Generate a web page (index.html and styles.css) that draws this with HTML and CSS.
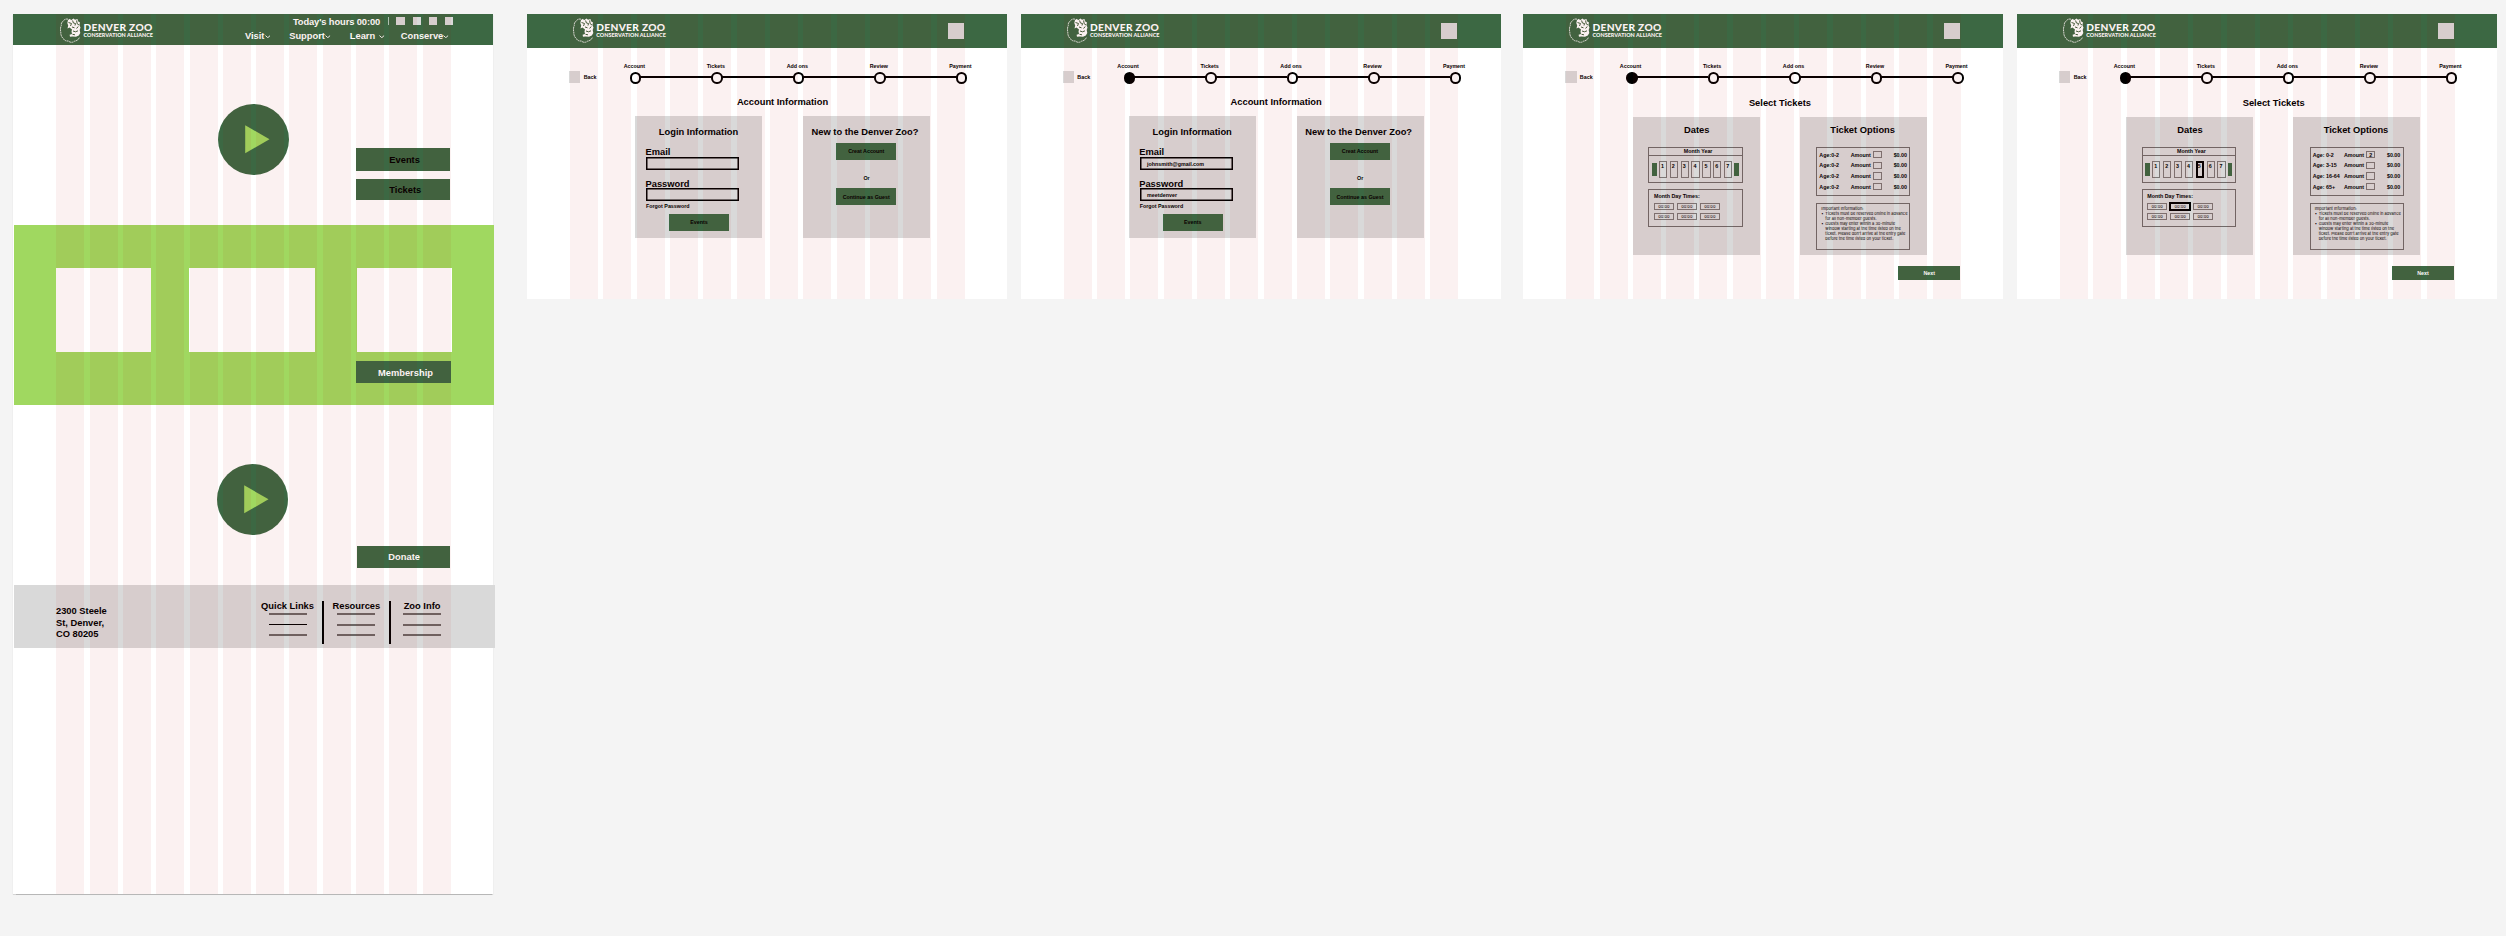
FILE: index.html
```html
<!DOCTYPE html>
<html lang="en">
<head>
<meta charset="utf-8">
<title>Denver Zoo wireframes</title>
<link rel="stylesheet" href="styles.css">
</head>
<body>
<svg class="defs" aria-hidden="true">
  <symbol id="lion" viewBox="0 0 21 25">
    <path d="M8 1.200C6 .6 4 1.500 3.200 3.200C1.800 3.800 1 5.500 1.300 7.500C.3 9.500 .2 12 .8 14C.6 17 1.800 19.500 3.500 20.800C4.500 22.800 6.800 23.200 8.500 23C10 24.800 13 24.600 14.500 23.200C17 22.800 18.800 21.500 19.500 19.200" fill="none" stroke="#fff" stroke-width=".8" stroke-dasharray="1.900 .5"/>
    <path d="M8 2L10 .8L11 2.200L13.500 .5L15 1.800L17.500 1L18 3.200L20 4.500L19.400 7L20.500 9.500L19.700 12L20.300 15L18.800 17.500L16 18.800L12.500 18.400L10 18.700L9.600 16.800L12 16L11.500 13.500L12 11.500L9.500 9.500L7.500 10.500L8.200 7.500L7.300 5Z" fill="#fff"/>
    <path d="M8.500 4.500L11.500 5.500L10.500 8M12.600 2.500L13.400 5L15.500 5.500L15 7.500M16.600 2.500L17.200 5.800L19 7M12 9L14.500 9.800M13 13L15.500 13.800L18 12.800M18.200 8.500L16.600 10.500M12.500 16.300L15 16.800" fill="none" stroke="#41603c" stroke-width="1"/>
  </symbol>
  <symbol id="chevron" viewBox="0 0 5 3">
    <path d="M.4 .5L2.500 2.400L4.600 .5" fill="none" stroke="#fff" stroke-width=".85"/>
  </symbol>
  <symbol id="play" viewBox="0 0 71 71">
    <circle cx="35.500" cy="35.500" r="35.500" fill="#3c6843"/>
    <path d="M27.200 21.200L51.500 35.300L27.200 49.300Z" fill="#a0d860"/>
  </symbol>
</svg>

<main class="board">
  <section class="frame home">
    <header class="home-header">
      <div class="logo"><svg><use href="#lion"/></svg><div><b>DENVER ZOO</b><i>CONSERVATION ALLIANCE</i></div></div>
      <div class="home-menu">
        <div class="hours"><span>Today's hours 00:00</span><hr><em></em><em></em><em></em><em></em></div>
        <nav class="nav">
          <a>Visit<svg><use href="#chevron"/></svg></a>
          <a>Support<svg><use href="#chevron"/></svg></a>
          <a>Learn <svg class="spaced"><use href="#chevron"/></svg></a>
          <a>Conserve<svg><use href="#chevron"/></svg></a>
        </nav>
      </div>
    </header>
    <div class="hero">
      <svg class="play"><use href="#play"/></svg>
      <div class="hero-actions"><a class="cta dark tall">Events</a><a class="cta dark">Tickets</a></div>
    </div>
    <div class="band">
      <div class="cards"><div></div><div></div><div></div></div>
      <a class="cta member">Membership</a>
    </div>
    <div class="hero second">
      <svg class="play"><use href="#play"/></svg>
      <a class="cta donate">Donate</a>
    </div>
    <footer class="footer">
      <address>2300 Steele<br>St, Denver,<br>CO 80205</address>
      <div class="links l1"><b>Quick Links</b><hr><hr class="strong"><hr></div>
      <div class="links l2"><b>Resources</b><hr><hr><hr></div>
      <div class="links l3"><b>Zoo Info</b><hr><hr><hr></div>
    </footer>
    <div class="columns"><i></i><i></i><i></i><i></i><i></i><i></i><i></i><i></i><i></i><i></i><i></i><i></i></div>
  </section>

  <section class="frame flow f2">
    <header class="flow-header"><div class="logo"><svg><use href="#lion"/></svg><div><b>DENVER ZOO</b><i>CONSERVATION ALLIANCE</i></div></div><em></em></header>
    <div class="progress">
      <div class="back"><em></em>Back</div>
      <ol class="steps"><li>Account</li><li>Tickets</li><li>Add ons</li><li>Review</li><li>Payment</li></ol>
    </div>
    <h1>Account Information</h1>
    <div class="panels account">
      <div class="panel login">
        <h2>Login Information</h2>
        <label>Email</label><div class="input"></div>
        <label>Password</label><div class="input"></div>
        <span class="forgot">Forgot Password</span>
        <a class="button">Events</a>
      </div>
      <div class="panel new">
        <h2>New to the Denver Zoo?</h2>
        <a class="button">Creat Account</a><span>Or</span><a class="button">Continue as Guest</a>
      </div>
    </div>
    <div class="columns"><i></i><i></i><i></i><i></i><i></i><i></i><i></i><i></i><i></i><i></i><i></i><i></i></div>
  </section>

  <section class="frame flow f3">
    <header class="flow-header"><div class="logo"><svg><use href="#lion"/></svg><div><b>DENVER ZOO</b><i>CONSERVATION ALLIANCE</i></div></div><em></em></header>
    <div class="progress">
      <div class="back"><em></em>Back</div>
      <ol class="steps"><li class="done">Account</li><li>Tickets</li><li>Add ons</li><li>Review</li><li>Payment</li></ol>
    </div>
    <h1>Account Information</h1>
    <div class="panels account">
      <div class="panel login">
        <h2>Login Information</h2>
        <label>Email</label><div class="input">johnsmith@gmail.com</div>
        <label>Password</label><div class="input">meetdenver</div>
        <span class="forgot">Forgot Password</span>
        <a class="button">Events</a>
      </div>
      <div class="panel new">
        <h2>New to the Denver Zoo?</h2>
        <a class="button">Creat Account</a><span>Or</span><a class="button">Continue as Guest</a>
      </div>
    </div>
    <div class="columns"><i></i><i></i><i></i><i></i><i></i><i></i><i></i><i></i><i></i><i></i><i></i><i></i></div>
  </section>

  <section class="frame flow f4">
    <header class="flow-header"><div class="logo"><svg><use href="#lion"/></svg><div><b>DENVER ZOO</b><i>CONSERVATION ALLIANCE</i></div></div><em></em></header>
    <div class="progress">
      <div class="back"><em></em>Back</div>
      <ol class="steps"><li class="done">Account</li><li>Tickets</li><li>Add ons</li><li>Review</li><li>Payment</li></ol>
    </div>
    <h1>Select Tickets</h1>
    <div class="panels tickets">
      <div class="panel dates">
        <h2>Dates</h2>
        <div class="calendar">
          <div class="month">Month Year</div>
          <div class="week"><i></i><div class="days"><b>1</b><b>2</b><b>3</b><b>4</b><b>5</b><b>6</b><b>7</b></div><i></i></div>
        </div>
        <div class="times">
          <h3>Month Day Times:</h3>
          <div class="slots"><span>00:00</span><span>00:00</span><span>00:00</span><span>00:00</span><span>00:00</span><span>00:00</span></div>
        </div>
      </div>
      <div class="panel options">
        <h2>Ticket Options</h2>
        <div class="prices">
          <div><span>Age:0-2</span><span>Amount</span><u></u><span>$0.00</span></div>
          <div><span>Age:0-2</span><span>Amount</span><u></u><span>$0.00</span></div>
          <div><span>Age:0-2</span><span>Amount</span><u></u><span>$0.00</span></div>
          <div><span>Age:0-2</span><span>Amount</span><u></u><span>$0.00</span></div>
        </div>
        <div class="info">Important Information:
          <ul><li>Tickets must be reserved online in advance<br>for all non-member guests.</li><li>Guests may enter within a 30-minute<br>window starting at the time listed on the<br>ticket. Please don’t arrive at the entry gate<br>before the time listed on your ticket.</li></ul>
        </div>
      </div>
    </div>
    <a class="next">Next</a>
    <div class="columns"><i></i><i></i><i></i><i></i><i></i><i></i><i></i><i></i><i></i><i></i><i></i><i></i></div>
  </section>

  <section class="frame flow f5">
    <header class="flow-header"><div class="logo"><svg><use href="#lion"/></svg><div><b>DENVER ZOO</b><i>CONSERVATION ALLIANCE</i></div></div><em></em></header>
    <div class="progress">
      <div class="back"><em></em>Back</div>
      <ol class="steps"><li class="done">Account</li><li>Tickets</li><li>Add ons</li><li>Review</li><li>Payment</li></ol>
    </div>
    <h1>Select Tickets</h1>
    <div class="panels tickets">
      <div class="panel dates">
        <h2>Dates</h2>
        <div class="calendar">
          <div class="month">Month Year</div>
          <div class="week"><i></i><div class="days"><b>1</b><b>2</b><b>3</b><b>4</b><b class="picked">5</b><b>6</b><b>7</b></div><i></i></div>
        </div>
        <div class="times">
          <h3>Month Day Times:</h3>
          <div class="slots"><span>00:00</span><span class="picked">00:00</span><span>00:00</span><span>00:00</span><span>00:00</span><span>00:00</span></div>
        </div>
      </div>
      <div class="panel options">
        <h2>Ticket Options</h2>
        <div class="prices">
          <div><span>Age: 0-2</span><span>Amount</span><u>2</u><span>$0.00</span></div>
          <div><span>Age: 3-15</span><span>Amount</span><u></u><span>$0.00</span></div>
          <div><span>Age: 16-64</span><span>Amount</span><u></u><span>$0.00</span></div>
          <div><span>Age: 65+</span><span>Amount</span><u></u><span>$0.00</span></div>
        </div>
        <div class="info">Important Information:
          <ul><li>Tickets must be reserved online in advance<br>for all non-member guests.</li><li>Guests may enter within a 30-minute<br>window starting at the time listed on the<br>ticket. Please don’t arrive at the entry gate<br>before the time listed on your ticket.</li></ul>
        </div>
      </div>
    </div>
    <a class="next">Next</a>
    <div class="columns"><i></i><i></i><i></i><i></i><i></i><i></i><i></i><i></i><i></i><i></i><i></i><i></i></div>
  </section>
</main>
</body>
</html>
```

FILE: styles.css
```css
* { box-sizing: border-box; margin: 0; padding: 0; }
body { width: 2506px; height: 936px; overflow: hidden; background: #f4f4f4; color: #000; font: bold 9.33px/10px "Liberation Sans", Arial, sans-serif; }
.defs { position: absolute; width: 0; height: 0; }
svg { display: block; flex: none; }
em { display: block; background: #d9d9d9; flex: none; }
i { font-style: normal; display: block; }
hr { border: 0; flex: none; }
a, span, label { display: block; white-space: nowrap; }
h1, h2 { font-size: 9.33px; line-height: 10px; text-align: center; white-space: nowrap; }

.board { display: flex; align-items: flex-start; padding: 13.5px 0 0 13.2px; }
.frame { position: relative; flex: none; width: 480px; background: #fff; }
.home { height: 880.5px; box-shadow: 0 1.3px 1px rgba(0,0,0,.25); }
.flow { height: 285.5px; }
.f2 { margin-left: 33.8px; }
.f3 { margin-left: 13.7px; }
.f4 { margin-left: 22.5px; }
.f5 { margin-left: 13.8px; }

/* twelve-column layout grid drawn over each frame */
.columns { position: absolute; inset: 0; display: grid; grid-template-columns: repeat(12, 28px); column-gap: 5.33px; padding-left: 43px; pointer-events: none; }
.columns i { background: rgba(190,0,0,.055); }

.logo { display: flex; color: #fff; font-family: Lato, sans-serif; }
.logo svg { width: 21px; height: 25px; }
.logo div { margin: 3px 0 0 2.3px; }
.logo b, .logo i { display: block; white-space: nowrap; }
.logo b { font-size: 10.2px; line-height: 12px; font-weight: 900; letter-spacing: .3px; }
.logo i { font-size: 5.4px; line-height: 6px; font-weight: 900; letter-spacing: .05px; margin-top: -1px; }

/* home */
.home-header { display: flex; height: 31.8px; background: #3c6843; color: #fff; padding-left: 47px; }
.home-header .logo { width: 184.7px; margin-top: 4px; }
.hours { display: flex; height: 17.5px; padding: 3.4px 0 0 48px; letter-spacing: -.1px; }
.hours span { width: 95.5px; }
.hours hr { width: .8px; height: 8px; background: #aebfb0; margin-right: 7.3px; margin-top: .4px; }
.hours em { width: 8.5px; height: 8.5px; margin-right: 7.6px; }
.nav { display: grid; grid-template-columns: 44.3px 60.6px 51px 50px; color: #fff; }
.nav a { display: flex; align-items: center; }
.nav svg { width: 5.6px; height: 3.4px; margin: 1px 0 0 .2px; }
.nav .spaced { margin-left: 3.8px; }

.hero { display: flex; height: 179.7px; }
.play { width: 71px; height: 71px; margin: 59px 0 0 204.6px; }
.hero-actions { margin: 102.7px 0 0 67.5px; }
.cta { width: 94px; height: 21.3px; background: #3c6843; color: #fff; text-align: center; padding: 6px 0 0 0; }
.cta.dark { color: #000; text-align: left; padding-left: 33px; }
.cta.tall { height: 23px; padding-top: 7px; margin-bottom: 8px; }
.band { width: 480.4px; height: 180px; margin-left: .6px; background: #a0d860; padding-top: 43px; }
.cards { display: flex; padding-left: 42.2px; }
.cards div { width: 95px; height: 83.6px; background: #fff; }
.cards div:nth-child(2) { width: 126px; margin: 0 41.8px 0 38.2px; }
.member { width: 95px; height: 22px; margin: 9.5px 0 0 342.2px; padding: 7px 0 0 4px; }
.second { height: 180.5px; }
.second .play { margin: 59px 0 0 203.8px; }
.donate { width: 93.3px; margin: 141.3px 0 0 69px; padding: 6px 0 0 1px; }
.footer { display: flex; width: 481px; margin-left: .6px; height: 62.3px; background: #d9d9d9; }
address { font-style: normal; line-height: 11.33px; width: 195.7px; padding: 21px 0 0 42.2px; white-space: nowrap; }
.links { margin-top: 15.5px; height: 43.5px; text-align: center; white-space: nowrap; }
.links b { display: block; margin-bottom: 2.5px; }
.links hr { width: 38px; height: 2px; background: #6b6665; margin: 0 auto 8.5px; }
.links .strong { height: 1px; background: #000; margin: 0 auto 9.5px; }
.l1 { margin-left: 42px; width: 70.2px; padding-left: 2px; }
.l2 { width: 69.4px; border-left: 2px solid #000; border-right: 2px solid #000; }
.l3 { width: 62px; }

/* booking frames */
.flow-header { display: flex; height: 34.3px; background: #3c6843; padding: 4.8px 0 0 46px; }
.flow-header .logo { width: 374.7px; }
.flow-header em { width: 16px; height: 16px; margin-top: 4.7px; }
.progress { display: flex; height: 42.7px; font-size: 5.33px; line-height: 6px; }
.back { display: flex; align-items: center; width: 67.2px; height: 11.5px; margin: 23.7px 0 0 42px; }
.back em { width: 11.5px; height: 11.5px; margin-right: 3.2px; }
.steps { list-style: none; display: flex; padding-top: 15.5px; margin-left: -42.6px; }
.steps li { position: relative; width: 81.5px; text-align: center; height: 20px; }
.steps li::before { content: ""; position: absolute; left: 43.5px; right: -37px; top: 12.5px; height: 2px; background: #000; }
.steps li:last-child::before { display: none; }
.steps li::after { content: ""; position: absolute; left: 36.4px; top: 9.1px; width: 7.4px; height: 7.4px; border: 2px solid #000; border-radius: 50%; background: #fff; }
.steps .done::after { background: #000; }

h1 { margin-top: 6.5px; padding-left: 31px; }
.panels { display: flex; }
.panel { height: 122px; width: 127px; background: #d9d9d9; flex: none; }
.account { margin: 9.3px 0 0 108px; gap: 41px; }
.login { padding: 10.3px 0 0 11px; }
.login h2 { margin-left: -11px; }
.login label { margin-top: 10.8px; margin-left: -.5px; }
.input { width: 93px; height: 13px; margin-top: -.6px; box-shadow: inset 0 0 0 1.5px #000; font-size: 5.33px; line-height: 6px; padding: 3.8px 0 0 7.4px; }
.login .input + label { margin-top: 9.3px; }
.forgot { font-size: 5.33px; line-height: 6px; margin-top: 2px; }
.button { width: 60px; height: 17px; background: #3c6843; font-size: 5.33px; line-height: 6px; padding-top: 5.5px; text-align: center; }
.login .button { margin: 4.5px 0 0 23px; }
.new { padding-top: 10.3px; }
.new h2 { margin-left: -3px; }
.new .button { margin: 6px 0 0 33.3px; }
.new span { font-size: 5.33px; line-height: 6px; text-align: center; margin: 15.5px 0 7px; }

.flow .tickets { margin: 9.5px 0 0 110px; gap: 39.5px; }
.f4 h1, .f5 h1 { margin-top: 7.3px; padding-left: 33.5px; }
.tickets .panel { height: 137.7px; padding-top: 7.3px; }
.calendar { width: 94.3px; height: 36.3px; margin: 12px 0 0 15.3px; border: 1px solid #6f6a69; }
.month { height: 8.5px; border-bottom: 1px solid #6f6a69; font-size: 5.33px; line-height: 6px; padding: .6px 0 0 5px; text-align: center; }
.week { display: flex; padding-left: 2.6px; }
.week > i { width: 4.8px; height: 13px; background: #3c6843; margin-top: 7px; }
.days { display: flex; gap: 2.7px; margin: 5.3px 2px 0; }
.days b { width: 8.2px; height: 17px; border: 1px solid #7b7675; font-size: 5.33px; line-height: 6px; padding-top: .6px; text-align: center; text-indent: -1px; }
.days .picked { border: 2px solid #000; padding-top: 0; }
.times { width: 94.3px; height: 38.3px; margin: 6px 0 0 15.3px; border: 1px solid #6f6a69; padding: 3px 0 0 4.5px; }
.times h3 { font-size: 5.33px; line-height: 6px; }
.slots { display: grid; grid-template-columns: repeat(3, 19.7px); gap: 3.3px; margin-top: 4.5px; font: 4px/5px Inter, sans-serif; }
.slots span { height: 6.7px; border: 1px solid #7b7675; text-align: center; }
.slots .picked { outline: 1px solid #000; border-color: #000; }
.options h2 { margin-left: -1px; }
.prices { width: 94px; height: 49.7px; margin: 12px 0 0 16.7px; border: 1px solid #6f6a69; padding: 1.8px 0 0 2px; font-size: 5.33px; line-height: 6px; }
.prices div { display: grid; grid-template-columns: 31.3px 22px 21px auto; height: 10.67px; align-items: center; }
.prices u { width: 9.5px; height: 7.5px; border: 1px solid #7b7675; text-decoration: none; text-align: center; }
.info { width: 94px; height: 46.8px; margin: 6.5px 0 0 16.7px; border: 1px solid #6f6a69; padding: 2.2px 0 0 4px; font: 4px/5px Inter, sans-serif; white-space: nowrap; }
.info ul { list-style: none; padding-left: 4px; }
.info li { position: relative; }
.info li::before { content: "•"; position: absolute; left: -4px; }
.next { width: 62px; height: 13.5px; margin: 11.3px 0 0 375px; background: #3c6843; color: #fff; font-size: 5.33px; line-height: 6px; text-align: center; padding-top: 4px; }
.f5 .tickets { margin-left: 109.5px; }
```
